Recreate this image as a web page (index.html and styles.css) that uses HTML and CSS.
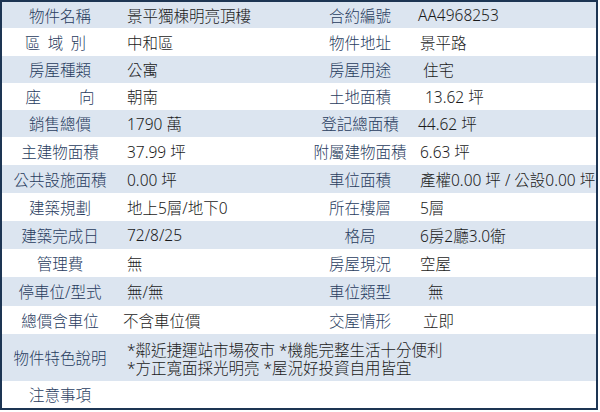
FILE: index.html
```html
<!DOCTYPE html>
<html lang="zh-Hant">
<head>
<meta charset="utf-8">
<title>物件資料</title>
<link rel="stylesheet" href="styles.css">
</head>
<body>
<div class="sheet">
  <div class="row h26 blue">
    <div class="lab">物件名稱</div><div class="val">景平獨棟明亮頂樓</div>
    <div class="lab r">合約編號</div><div class="val v2 i-2">AA4968253</div>
  </div>
  <div class="row h28">
    <div class="lab"><span class="spread s3">區域別</span></div><div class="val">中和區</div>
    <div class="lab r">物件地址</div><div class="val v2">景平路</div>
  </div>
  <div class="row h27 blue">
    <div class="lab">房屋種類</div><div class="val">公寓</div>
    <div class="lab r">房屋用途</div><div class="val v2 i3">住宅</div>
  </div>
  <div class="row h27">
    <div class="lab"><span class="spread s2">座向</span></div><div class="val">朝南</div>
    <div class="lab r">土地面積</div><div class="val v2 i5">13.62 坪</div>
  </div>
  <div class="row h27 blue">
    <div class="lab">銷售總價</div><div class="val">1790 萬</div>
    <div class="lab r">登記總面積</div><div class="val v2 i-2">44.62 坪</div>
  </div>
  <div class="row h28">
    <div class="lab">主建物面積</div><div class="val">37.99 坪</div>
    <div class="lab r">附屬建物面積</div><div class="val v2">6.63 坪</div>
  </div>
  <div class="row h28 blue">
    <div class="lab">公共設施面積</div><div class="val">0.00 坪</div>
    <div class="lab r">車位面積</div><div class="val v2">產權0.00 坪 / 公設0.00 坪</div>
  </div>
  <div class="row h28">
    <div class="lab">建築規劃</div><div class="val">地上5層/地下0</div>
    <div class="lab r">所在樓層</div><div class="val v2">5層</div>
  </div>
  <div class="row h28 blue">
    <div class="lab">建築完成日</div><div class="val">72/8/25</div>
    <div class="lab r">格局</div><div class="val v2">6房2廳3.0衛</div>
  </div>
  <div class="row h28">
    <div class="lab">管理費</div><div class="val">無</div>
    <div class="lab r">房屋現況</div><div class="val v2">空屋</div>
  </div>
  <div class="row h29 blue">
    <div class="lab">停車位/型式</div><div class="val">無/無</div>
    <div class="lab r">車位類型</div><div class="val v2 i8">無</div>
  </div>
  <div class="row h28">
    <div class="lab">總價含車位</div><div class="val i-4">不含車位價</div>
    <div class="lab r">交屋情形</div><div class="val v2 i3">立即</div>
  </div>
  <div class="row wide h47 blue">
    <div class="lab">物件特色說明</div>
    <div class="val multi">
      <div class="line">*鄰近捷運站市場夜市 *機能完整生活十分便利</div>
      <div class="line">*方正寬面採光明亮 *屋況好投資自用皆宜</div>
    </div>
  </div>
  <div class="row wide h27">
    <div class="lab">注意事項</div>
    <div class="val"></div>
  </div>
</div>
</body>
</html>
```
FILE: styles.css
```css
html, body {
  margin: 0;
  padding: 0;
  background: #ffffff;
}
.sheet {
  width: 598px;
  height: 410px;
  box-sizing: border-box;
  border: 2px solid #1d3553;
  display: flex;
  flex-direction: column;
  font-family: "Noto Sans", "Noto Sans CJK TC", sans-serif;
  font-size: 15.5px;
  font-weight: 300;
  color: #1a1a1a;
  background: #ffffff;
}
.row {
  display: grid;
  grid-template-columns: 116px 187px 110px 1fr;
  align-items: center;
}
.row.wide {
  grid-template-columns: 116px 1fr;
}
.blue { background: #dce5f0; }
.h26 { height: 26px; }
.h27 { height: 27px; }
.h28 { height: 28px; }
.h29 { height: 29px; }
.h47 { height: 47px; }
.lab {
  text-align: center;
  color: #283c5e;
  white-space: nowrap;
}
.val {
  padding-left: 9px;
  white-space: nowrap;
}
.val.v2 { padding-left: 5px; }
.i-2 { margin-left: -2px; }
.i-4 { margin-left: -4px; }
.i3 { margin-left: 3px; }
.i5 { margin-left: 5px; }
.i8 { margin-left: 8px; }
.multi {
  display: flex;
  flex-direction: column;
  gap: 0;
  padding-top: 2px;
}
.line {
  height: 18px;
  line-height: 18px;
  overflow: visible;
}
.spread {
  display: inline-block;
  text-align: justify;
  text-align-last: justify;
}
.s3 { width: 61px; margin-right: 9px; }
.s2 { width: 69px; }
```
